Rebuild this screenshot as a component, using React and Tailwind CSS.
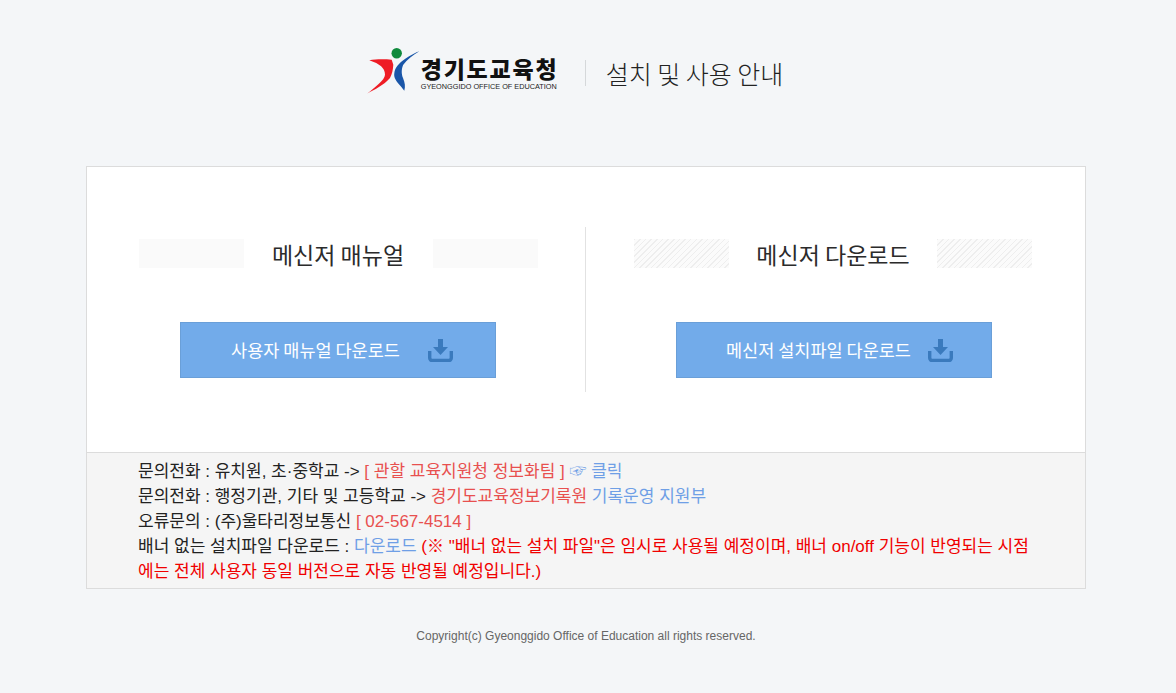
function Logo() {
  return (
    <svg width="56" height="50" viewBox="0 0 56 50" className="shrink-0">
      <circle cx="30.700" cy="5.200" r="5.200" fill="#0f8a3c" />
      <path d="M3.300 12.300 C10 11 18 11 25.700 11.700 L27.300 16.700 C27 22 26 26 24 30 C18 37 8 42 1.300 45.500 C8 40 19 32 19 26.700 C19 20 14 16 3.300 12.300 Z" fill="#ee1c25" />
      <path d="M53.300 3.300 C46 6 38 11 33 16 C29 20 28 24 28.300 28.300 C29 33 35 38 38.300 42.700 C39.500 38 39 35 37 30 C35 25 35.700 20 37.300 16.700 C41 12 47 7 53.300 3.300 Z" fill="#1a56a8" />
    </svg>
  );
}
function DownloadIcon() {
  return (
    <svg width="25" height="24" viewBox="0 0 25 24" className="shrink-0">
      <path d="M10 1 h5 v8 h5 l-7.500 8 l-7.500 -8 h5 Z" fill="#3a7abd" />
      <path d="M1.700 13 v7 a2.500 2.500 0 0 0 2.500 2.500 h16.600 a2.500 2.500 0 0 0 2.500 -2.500 v-7" fill="none" stroke="#3a7abd" strokeWidth="3.400" />
    </svg>
  );
}
function Stripe({ hatch, className }) {
  return (
    <div className={`h-[29px] ${hatch ? "bg-[repeating-linear-gradient(135deg,#eeeeee_0,#eeeeee_1px,#fbfbfb_1px,#fbfbfb_4px)]" : "bg-[#fafafa]"} ${className}`} />
  );
}
function Column({ title, button, hatch, columnClass, rowClass, buttonClass }) {
  return (
    <div className={`flex flex-col items-center h-[165px] ${columnClass}`}>
      <div className={`flex items-center justify-between h-[29px] mt-[12px] ${rowClass}`}>
        <Stripe hatch={hatch} className={hatch ? "w-[95px]" : "w-[105px]"} />
        <h2 className="font-['Noto_Sans_CJK_KR',sans-serif] text-[23px] leading-[32px] mt-[1px] font-normal text-[#2b2b2b]">{title}</h2>
        <Stripe hatch={hatch} className={hatch ? "w-[95px]" : "w-[105px]"} />
      </div>
      <a className={`mt-[54px] w-[316px] h-[56px] flex items-center justify-center ${buttonClass} bg-[#72abea] border border-[#6a9fd8] text-white font-['Noto_Sans_CJK_KR',sans-serif] text-[17.500px] font-normal`}>
        <span>{button}</span>
        <DownloadIcon />
      </a>
    </div>
  );
}
export default function App() {
  return (
    <div className="min-h-[693px] bg-[#f4f6f8] font-['Liberation_Sans','Noto_Sans_CJK_KR',sans-serif] flex flex-col items-center pt-[48px] pr-[4px]">
      <header className="h-[50px] flex items-center mr-[23px]">
        <Logo />
        <div className="ml-[-1px] flex flex-col items-start w-[144px]">
          <span className="font-['Noto_Sans_CJK_KR',sans-serif] font-black text-[23px] leading-[28px] text-[#111] tracking-[1.800px] whitespace-nowrap">경기도교육청</span>
          <span className="text-[7.300px] leading-[10px] text-[#222] whitespace-nowrap">GYEONGGIDO OFFICE OF EDUCATION</span>
        </div>
        <div className="w-px h-[26px] bg-[#d5d8da] ml-[20px] mr-[20px]" />
        <h1 className="font-['Noto_Sans_CJK_KR',sans-serif] font-light text-[25px] leading-[34px] text-[#222]">설치 및 사용 안내</h1>
      </header>
      <main className="mt-[68px] w-[1000px] h-[423px] border border-[#dcdcdc] bg-white flex flex-col">
        <div className="h-[285px] pt-[60px] flex">
          <Column title="메신저 매뉴얼" button="사용자 매뉴얼 다운로드" columnClass="w-[499px] pl-[4px] border-r border-[#e2e2e2]" rowClass="w-[399px]" buttonClass="gap-[28px] pl-[8px]" />
          <Column title="메신저 다운로드" button="메신저 설치파일 다운로드" hatch columnClass="w-[499px] pr-[3px]" rowClass="w-[398px] mr-[2px]" buttonClass="gap-[17px] pl-[11px]" />
        </div>
        <div className="flex-1 border-t border-[#dcdcdc] bg-[#f5f5f5] pl-[51px] pr-[50px] pt-[6px] text-[17px] leading-[25px] text-[#222]">
          <p>문의전화 : 유치원, 초·중학교 -&gt; <span className="text-[#e8504f]">[ 관할 교육지원청 정보화팀 ]</span> <span className="text-[#6f9fe6]">☞ 클릭</span></p>
          <p>문의전화 : 행정기관, 기타 및 고등학교 -&gt; <span className="text-[#e8504f]">경기도교육정보기록원</span> <span className="text-[#6f9fe6]">기록운영 지원부</span></p>
          <p>오류문의 : (주)울타리정보통신 <span className="text-[#e8504f]">[ 02-567-4514 ]</span></p>
          <p>배너 없는 설치파일 다운로드 : <span className="text-[#6f9fe6]">다운로드</span> <span className="text-[#f00000]">(※ "배너 없는 설치 파일"은 임시로 사용될 예정이며, 배너 on/off 기능이 반영되는 시점에는 전체 사용자 동일 버전으로 자동 반영될 예정입니다.)</span></p>
        </div>
      </main>
      <footer className="mt-[39px] text-[12px] leading-[16px] text-[#666]">Copyright(c) Gyeonggido Office of Education all rights reserved.</footer>
    </div>
  );
}
